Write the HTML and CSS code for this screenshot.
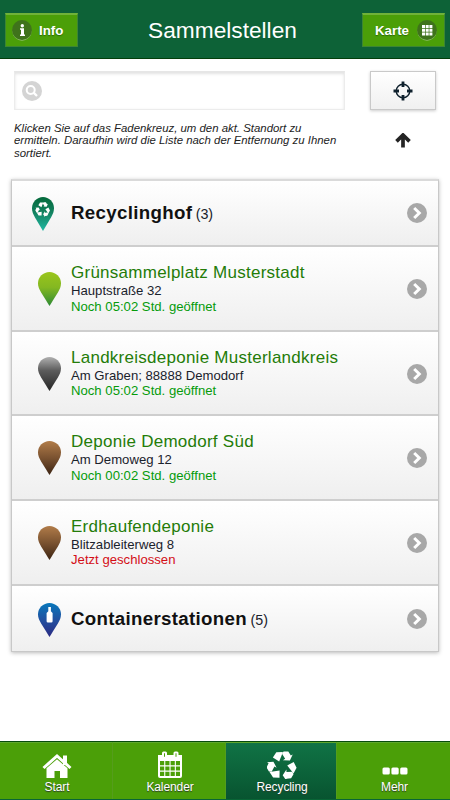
FILE: index.html
```html
<!DOCTYPE html>
<html lang="de">
<head>
<meta charset="utf-8">
<title>Sammelstellen</title>
<link rel="stylesheet" href="styles.css">
</head>
<body>
<svg class="defs" width="0" height="0" aria-hidden="true">
  <defs>
    <linearGradient id="teal" x1="0" y1="0" x2="0" y2="1"><stop offset="0" stop-color="#04693a"/><stop offset=".45" stop-color="#12815f"/><stop offset="1" stop-color="#20b9a4"/></linearGradient>
    <linearGradient id="green" x1="0" y1="0" x2="0" y2="1"><stop offset="0" stop-color="#9ac51c"/><stop offset=".45" stop-color="#84b821"/><stop offset="1" stop-color="#2d8a35"/></linearGradient>
    <linearGradient id="gray" x1="0" y1="0" x2="0" y2="1"><stop offset="0" stop-color="#b0b0b0"/><stop offset=".4" stop-color="#5c5c5c"/><stop offset="1" stop-color="#252525"/></linearGradient>
    <linearGradient id="brown" x1="0" y1="0" x2="0" y2="1"><stop offset="0" stop-color="#b17c49"/><stop offset=".5" stop-color="#7a5230"/><stop offset="1" stop-color="#3c2413"/></linearGradient>
    <linearGradient id="blue" x1="0" y1="0" x2="0" y2="1"><stop offset="0" stop-color="#0878bb"/><stop offset=".5" stop-color="#2250a0"/><stop offset="1" stop-color="#2b2a83"/></linearGradient>
    <path id="pin" d="M11.500 0C5.200 0 0 5 0 11.200C0 14.500 1.300 17.300 3 20.200L11.500 34L20 20.200C21.700 17.300 23 14.500 23 11.200C23 5 17.800 0 11.500 0Z"/>
    <g id="arm"><path d="M-29-26L-18-43L3-44L-9-14Z"/><path d="M5-45H20L28-33L34-36L25-17L3-18L10-22L0-38Z"/></g>
    <g id="recycle"><use href="#arm"/><use href="#arm" transform="rotate(120)"/><use href="#arm" transform="rotate(240)"/></g>
    <g id="chevron"><circle cx="10" cy="10" r="10" fill="#a8a8a8"/><path d="M7.200 5L12.300 10L7.200 15" fill="none" stroke="#fff" stroke-width="3"/></g>
  </defs>
</svg>

<header class="header">
  <a class="nav-button">
    <svg width="20" height="21" viewBox="0 0 20 21"><circle cx="10" cy="11" r="9.700" fill="#91bd6e"/><circle cx="10" cy="10" r="10" fill="#3f731b"/><circle cx="10.300" cy="5.800" r="1.700" fill="#fff"/><path d="M8 8.300h4v6.200h1V16H8v-1.500h1V9.800H8z" fill="#fff"/></svg>
    <span>Info</span>
  </a>
  <h1 class="title">Sammelstellen</h1>
  <a class="nav-button nav-button-right">
    <span>Karte</span>
    <svg width="20" height="21" viewBox="0 0 20 21"><circle cx="10" cy="11" r="9.700" fill="#91bd6e"/><circle cx="10" cy="10" r="10" fill="#3f731b"/><path d="M5 5h3v3H5zM8.700 5h3v3h-3zM12.400 5h3v3h-3zM5 8.700h3v3H5zM8.700 8.700h3v3h-3zM12.400 8.700h3v3h-3zM5 12.400h3v3H5zM8.700 12.400h3v3h-3zM12.400 12.400h3v3h-3z" fill="#fff"/></svg>
  </a>
</header>

<main class="content">
  <section class="tools">
    <div class="search">
      <svg width="20" height="20" viewBox="0 0 20 20"><circle cx="10" cy="10" r="10" fill="#d4d4d4"/><circle cx="8.700" cy="9" r="4" fill="none" stroke="#fff" stroke-width="2"/><path d="M11.600 11.700L15 15" stroke="#fff" stroke-width="2.400"/></svg>
    </div>
    <a class="locate">
      <svg width="20" height="20" viewBox="0 0 20 20" fill="none" stroke="#10222e"><circle cx="10" cy="10" r="6.800" stroke-width="1.400"/><path d="M10 .5V6M10 14V19.500M.5 10H6M14 10H19.500" stroke-width="2.800"/></svg>
    </a>
    <p class="hint">Klicken Sie auf das Fadenkreuz, um den akt. Standort zu<br>ermitteln. Daraufhin wird die Liste nach der Entfernung zu Ihnen<br>sortiert.</p>
    <svg class="arrow" width="16" height="15" viewBox="0 0 16 15" fill="none" stroke="#242424"><path d="M1.500 8.300L8 2L14.500 8.300M8 3V14.500" stroke-width="3.700"/></svg>
  </section>

  <ul class="list">
    <li class="row group first">
      <svg class="pin" width="22" height="34" viewBox="0 0 23 34" preserveAspectRatio="none"><use href="#pin" fill="url(#teal)"/><use href="#recycle" fill="#fff" transform="translate(11.300 12.500) scale(.16)"/></svg>
      <div class="text"><strong>Recyclinghof</strong> <span>(3)</span></div>
      <svg class="go" width="20" height="20"><use href="#chevron"/></svg>
    </li>
    <li class="row">
      <svg class="pin" width="23" height="34"><use href="#pin" fill="url(#green)"/></svg>
      <div class="text"><h2>Grünsammelplatz Musterstadt</h2><p>Hauptstraße 32</p><p class="open">Noch 05:02 Std. geöffnet</p></div>
      <svg class="go" width="20" height="20"><use href="#chevron"/></svg>
    </li>
    <li class="row">
      <svg class="pin" width="23" height="34"><use href="#pin" fill="url(#gray)"/></svg>
      <div class="text"><h2>Landkreisdeponie Musterlandkreis</h2><p>Am Graben; 88888 Demodorf</p><p class="open">Noch 05:02 Std. geöffnet</p></div>
      <svg class="go" width="20" height="20"><use href="#chevron"/></svg>
    </li>
    <li class="row">
      <svg class="pin" width="23" height="34"><use href="#pin" fill="url(#brown)"/></svg>
      <div class="text"><h2>Deponie Demodorf Süd</h2><p>Am Demoweg 12</p><p class="open">Noch 00:02 Std. geöffnet</p></div>
      <svg class="go" width="20" height="20"><use href="#chevron"/></svg>
    </li>
    <li class="row">
      <svg class="pin" width="23" height="34"><use href="#pin" fill="url(#brown)"/></svg>
      <div class="text"><h2>Erdhaufendeponie</h2><p>Blitzableiterweg 8</p><p class="closed">Jetzt geschlossen</p></div>
      <svg class="go" width="20" height="20"><use href="#chevron"/></svg>
    </li>
    <li class="row group last">
      <svg class="pin" width="23" height="34"><use href="#pin" fill="url(#blue)"/><path d="M10.300 4h2.600v4.300l1.700 1.700v8.300q0 1.300-1.300 1.300H9.900q-1.300 0-1.300-1.300V10l1.700-1.700z" fill="#fff"/></svg>
      <div class="text"><strong>Containerstationen</strong> <span>(5)</span></div>
      <svg class="go" width="20" height="20"><use href="#chevron"/></svg>
    </li>
  </ul>
</main>

<nav class="tabs">
  <a class="tab">
    <svg width="30" height="28" viewBox="0 0 30 28" fill="#fff"><path d="M1.500 17L15 5L28.500 17" fill="none" stroke="#fff" stroke-width="3"/><path d="M21 4.500h4V14h-4zM4.500 17.300L15 8.200L25.500 17.300V27H18v-7h-5.500v7h-8z"/></svg>
    <span>Start</span>
  </a>
  <a class="tab">
    <svg width="26" height="28" viewBox="0 0 26 28"><path d="M1 4h24v21q0 2-2 2H3q-2 0-2-2z" fill="#fff"/><rect x="5" y=".5" width="5" height="7" rx="1.500" fill="#fff"/><rect x="16.500" y=".5" width="5" height="7" rx="1.500" fill="#fff"/><path d="M7 2.300h1v3.500h-1zM18.500 2.300h1v3.500h-1z" fill="#4b9f08"/><path d="M3 10h4.200v4.300H3zM8.300 10h4.200v4.300H8.300zM13.600 10h4.200v4.300h-4.200zM18.900 10H23v4.300h-4.100zM3 15.500h4.200v4H3zM8.300 15.500h4.200v4H8.300zM13.600 15.500h4.200v4h-4.200zM18.900 15.500H23v4h-4.100zM3 20.700h4.200v4.200H3zM8.300 20.700h4.200v4.200H8.300zM13.600 20.700h4.200v4.200h-4.200zM18.900 20.700H23v4.200h-4.100z" fill="#4b9f08"/></svg>
    <span>Kalender</span>
  </a>
  <a class="tab active">
    <svg width="30" height="28" viewBox="0 0 30 28"><use href="#recycle" fill="#fff" transform="translate(15 14.800) scale(.315)"/></svg>
    <span>Recycling</span>
  </a>
  <a class="tab">
    <svg width="26" height="28" viewBox="0 0 26 28" fill="#fff"><rect x=".5" y="16.500" width="7.300" height="7" rx="1.500"/><rect x="9.400" y="16.500" width="7.300" height="7" rx="1.500"/><rect x="18.200" y="16.500" width="7.300" height="7" rx="1.500"/></svg>
    <span>Mehr</span>
  </a>
</nav>
</body>
</html>
```

FILE: styles.css
```css
* { box-sizing: border-box; }
body {
  margin: 0;
  height: 800px;
  display: flex;
  flex-direction: column;
  overflow: hidden;
  background: #fff;
  color: #1a222c;
  font-family: "Liberation Sans", Arial, sans-serif;
}
h1, h2, p, ul { margin: 0; padding: 0; font-weight: normal; }
svg { display: block; flex: none; }
.defs { position: absolute; }

.header {
  height: 59px;
  flex: none;
  display: grid;
  grid-template-columns: 83px 1fr 83px;
  padding: 13px 5px 0;
  background: #0d6237;
  border-bottom: 1px solid #033f0b;
}
.nav-button {
  width: 73px;
  height: 34px;
  display: flex;
  align-items: center;
  gap: 7px;
  padding: 0 0 0 6px;
  background: #4b9f08;
  border: 1px solid #3c8534;
  border-top: 2px solid #70b239;
  color: #fff;
  font-size: 13.300px;
  font-weight: bold;
  text-shadow: 0 1px 1px #2c6b05;
}
.nav-button-right { width: 83px; gap: 8px; padding-left: 12px; }
.title {
  padding-right: 5px;
  text-align: center;
  color: #fff;
  font-size: 22.700px;
  line-height: 34px;
}

.content { flex: 1; padding: 12px 11px 0; }
.tools {
  display: grid;
  grid-template-columns: 331px 66px;
  column-gap: 25px;
  padding-left: 3px;
}
.search {
  height: 39px;
  display: flex;
  align-items: center;
  padding-left: 7px;
  border: 1px solid #ececec;
  border-top: 2px solid #e6e6e6;
  box-shadow: inset 0 1px 3px #e2e2e2;
}
.locate {
  height: 39px;
  display: flex;
  align-items: center;
  justify-content: center;
  border: 1px solid #c9c9c9;
  background: linear-gradient(#fff, #f0f0f0);
  box-shadow: 0 1px 3px #ccc;
}
.hint {
  height: 36px;
  margin-top: 12px;
  font-size: 11.400px;
  line-height: 12.400px;
  font-style: italic;
  white-space: nowrap;
  color: #222;
}
.arrow { margin: 23px 0 0 25px; }

.list {
  list-style: none;
  margin-top: 21px;
  border: 1px solid #c8c8c8;
  border-top: 2px solid #dadada;
  box-shadow: 0 1px 4px #bbb;
}
.row {
  height: 84.670px;
  display: flex;
  padding: 0 11px 0 26px;
  background: linear-gradient(#fff, #efefef);
  border-bottom: 2px solid #cecece;
}
.row .pin { margin: 25px 10px 0 0; }
.row .go { margin-top: 32px; }
.text { flex: 1; padding-top: 16px; white-space: nowrap; }
.text h2 { font-size: 17px; line-height: 20px; letter-spacing: .26px; color: #247c08; }
.text p { font-size: 13.150px; line-height: 15.500px; }
.text .open { color: #059b0b; }
.text .closed { color: #d30d16; }
.group { height: 66px; }
.group .text { padding-top: 20px; line-height: 24px; }
.group strong { font-size: 18.700px; letter-spacing: .32px; color: #111; }
.group span { margin-left: -1px; font-size: 14.300px; }
.group .pin { margin-top: 16px; }
.group .go { margin-top: 22px; }
.first { padding-left: 20px; }
.first .pin { margin-right: 17px; }
.last { height: 65px; padding-top: 1px; border-bottom: 0; }

.tabs {
  height: 59px;
  flex: none;
  display: grid;
  grid-template-columns: 113px 113px 111px 113px;
  background: #4b9f08;
  border-top: 1px solid #064b0b;
  border-bottom: 1px solid #096536;
}
.tab {
  display: flex;
  flex-direction: column;
  align-items: center;
  padding: 8px 0 0 2px;
  border-top: 1px solid #5ea72d;
  border-right: 1px solid #559d1c;
  color: #fff;
  font-size: 12px;
  letter-spacing: -.1px;
  line-height: 16px;
  text-shadow: 0 1px 1px #2d3b29;
}
.tab:last-child { border-right: 0; }
.active { background: linear-gradient(#107345, #085430); }
```
